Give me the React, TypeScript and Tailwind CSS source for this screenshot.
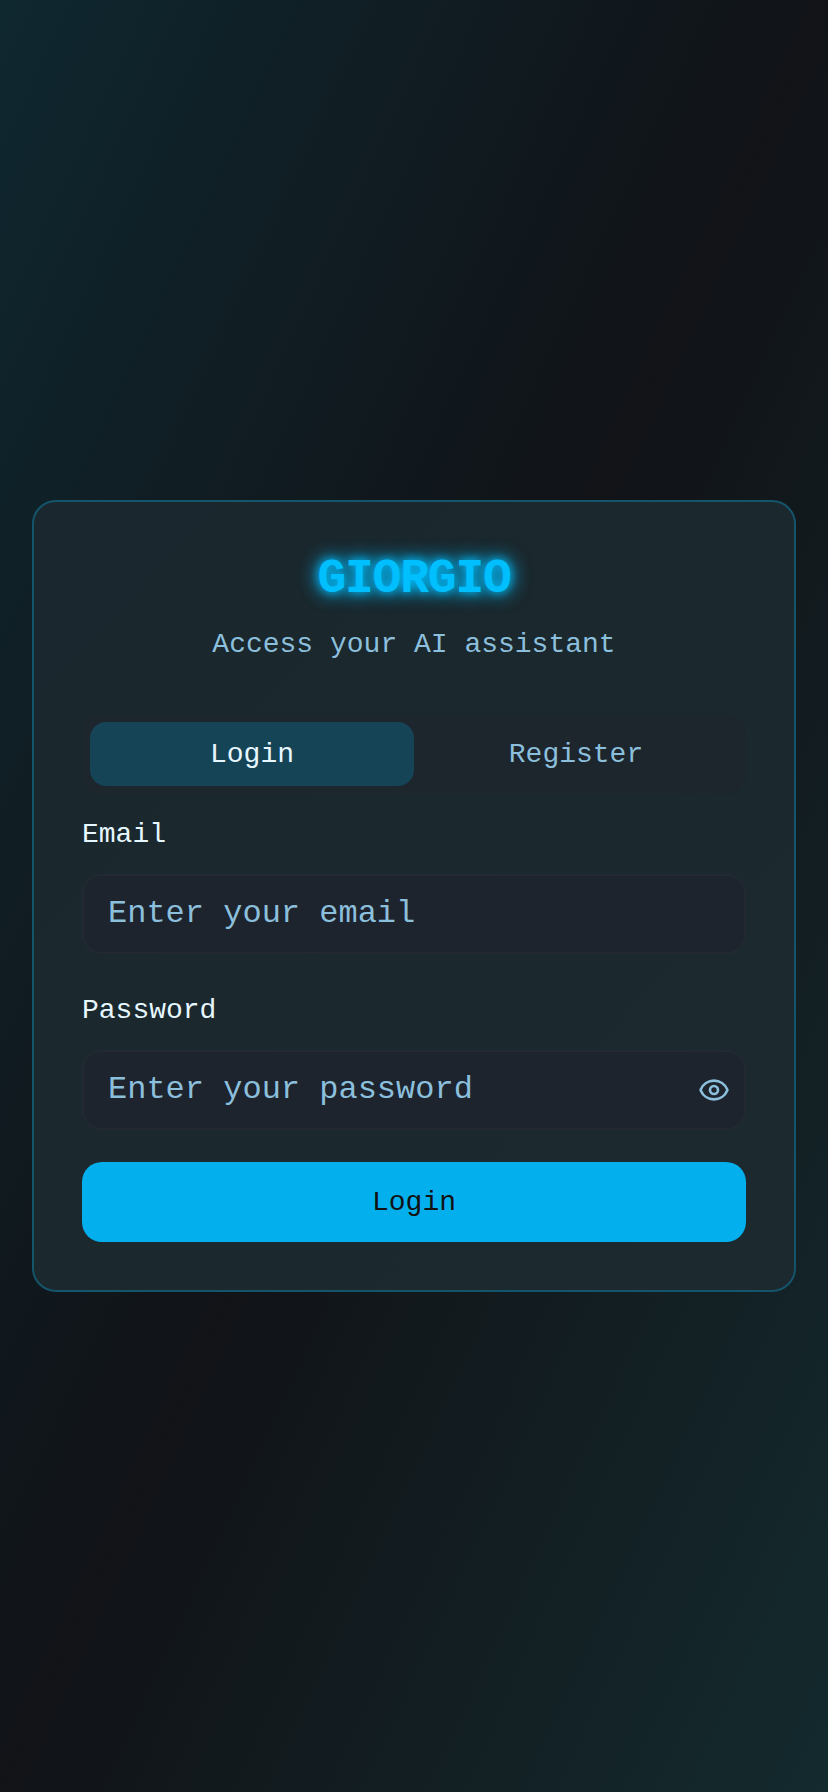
import { Eye } from "lucide-react";

function Field({ label, type, placeholder, icon }: { label: string; type: string; placeholder: string; icon?: boolean }) {
  return (
    <div className="flex flex-col gap-4">
      <div className="h-12 text-[32px] leading-[48px]">
        <label htmlFor={type} className="text-[28px] leading-none">{label}</label>
      </div>
      <div className="relative">
        <input
          id={type}
          type={type}
          placeholder={placeholder}
          className="block h-20 w-full rounded-[20px] border-2 border-[#232932] bg-[#1d242d] px-6 pb-0.5 text-[32px] text-[#e6f7ff] outline-none placeholder:text-[#8bbfdc] placeholder:opacity-100"
        />
        {icon && (
          <button type="button" aria-label="Show password" className="absolute top-6 right-4 text-[#8bbfdc]">
            <Eye size={32} />
          </button>
        )}
      </div>
    </div>
  );
}

export default function App() {
  return (
    <main className="flex min-h-screen items-center justify-center bg-linear-to-br/srgb from-[#0f272f] via-[#111317] to-[#142a2e] px-8 font-['Liberation_Mono',monospace] text-[#e6f7ff]">
      <section className="w-full rounded-[24px] border-2 border-[#14556c] bg-linear-to-br/srgb from-[#1a272e] via-[#1b282d] to-[#1c292e] bg-origin-border p-12">
        <header className="mb-[49px] text-center">
          <h1 className="mb-4 text-5xl leading-[59px] font-bold tracking-[-0.025em] text-[#00bfff] [text-shadow:0_0_10px_#00bfff,0_0_20px_#00bfff,0_0_20px_rgba(0,191,255,0.4)]">GIORGIO</h1>
          <p className="text-[28px] leading-10 text-[#8bbfdc]">Access your AI assistant</p>
        </header>
        <div className="grid h-20 grid-cols-2 rounded-[20px] bg-[#1d252d] p-2 text-[28px] leading-10">
          <button type="button" className="rounded-2xl bg-[#164457] pt-0.5">Login</button>
          <button type="button" className="rounded-2xl pt-0.5 text-[#8bbfdc]">Register</button>
        </div>
        <form className="mt-4 flex flex-col gap-8">
          <Field label="Email" type="email" placeholder="Enter your email" />
          <Field label="Password" type="password" placeholder="Enter your password" icon />
          <button type="button" className="h-20 rounded-[20px] bg-[#03b0ed] pt-0.5 text-[28px] leading-10 text-[#121214]">Login</button>
        </form>
      </section>
    </main>
  );
}
